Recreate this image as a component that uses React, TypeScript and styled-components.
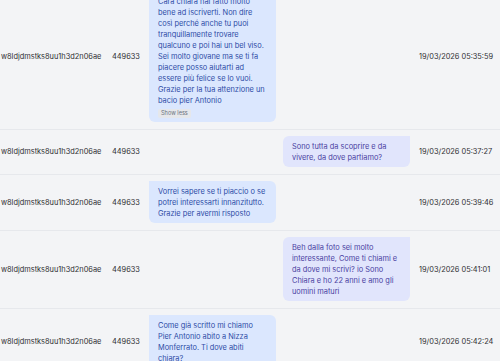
import React from "react";
import styled, { createGlobalStyle } from "styled-components";

const Global = createGlobalStyle`
  html, body { margin: 0; padding: 0; background: #f3f4f6; }
  body { font-family: Inter, "Noto Sans", sans-serif; overflow: hidden; }
`;

const Viewport = styled.div`
  width: 500px;
  height: 361px;
  overflow: hidden;
`;

const List = styled.div`
  margin-top: -15.5px;
  display: flex;
  flex-direction: column;
`;

const Row = styled.div`
  display: grid;
  grid-template-columns: 112px 37px 261px 1fr;
  align-items: center;
  padding: 6.5px 0;
  border-bottom: 1px solid #e6e8ec;
`;

const Cell = styled.div`
  font-size: 7.4px;
  color: #2f2f33;
  white-space: nowrap;
`;

const IdCell = styled(Cell)`
  padding-left: 1px;
`;

const DateCell = styled(Cell)`
  padding-left: 9px;
`;

const MessageCell = styled.div<{ $side: "in" | "out" }>`
  display: flex;
  justify-content: ${(p) => (p.$side === "in" ? "flex-start" : "flex-end")};
`;

const Bubble = styled.div<{ $side: "in" | "out" }>`
  box-sizing: border-box;
  max-width: 127px;
  padding: 4.5px 9px;
  font-size: 7.4px;
  line-height: 11px;
  border-radius: 6px;
  ${(p) =>
    p.$side === "in"
      ? `border-top-left-radius: 0; background: #dbe7fe; color: #2e4ca6;`
      : `border-top-right-radius: 0; background: #e1e5fc; color: #4a3fa2;`}
`;

const ToggleBadge = styled.span`
  display: inline-block;
  margin-top: 3px;
  padding: 1px 3px;
  font-size: 5.6px;
  line-height: 7px;
  color: #6b7280;
  background: #e5e7eb;
  border-radius: 2px;
`;

type Msg = { side: "in" | "out"; text: string; date: string; toggle?: boolean };

const messages: Msg[] = [
  {
    side: "in",
    text:
      "Cara chiara hai fatto molto bene ad iscriverti. Non dire così perché anche tu puoi tranquillamente trovare qualcuno e poi hai un bel viso. Sei molto giovane ma se ti fa piacere posso aiutarti ad essere più felice se lo vuoi. Grazie per la tua attenzione un bacio pier Antonio",
    date: "19/03/2026 05:35:59",
    toggle: true,
  },
  {
    side: "out",
    text: "Sono tutta da scoprire e da vivere, da dove partiamo?",
    date: "19/03/2026 05:37:27",
  },
  {
    side: "in",
    text: "Vorrei sapere se ti piaccio o se potrei interessarti innanzitutto. Grazie per avermi risposto",
    date: "19/03/2026 05:39:46",
  },
  {
    side: "out",
    text:
      "Beh dalla foto sei molto interessante, Come ti chiami e da dove mi scrivi? io Sono Chiara e ho 22 anni e amo gli uomini maturi",
    date: "19/03/2026 05:41:01",
  },
  {
    side: "in",
    text: "Come già scritto mi chiamo Pier Antonio abito a Nizza Monferrato. Ti dove abiti chiara?",
    date: "19/03/2026 05:42:24",
  },
];

export default function App() {
  return (
    <Viewport>
      <Global />
      <List>
        {messages.map((m, i) => (
          <Row key={i}>
            <IdCell>w8ldjdmstks8uu1h3d2n06ae</IdCell>
            <Cell>449633</Cell>
            <MessageCell $side={m.side}>
              <Bubble $side={m.side}>
                {m.text}
                {m.toggle && (
                  <div>
                    <ToggleBadge>Show less</ToggleBadge>
                  </div>
                )}
              </Bubble>
            </MessageCell>
            <DateCell>{m.date}</DateCell>
          </Row>
        ))}
      </List>
    </Viewport>
  );
}
